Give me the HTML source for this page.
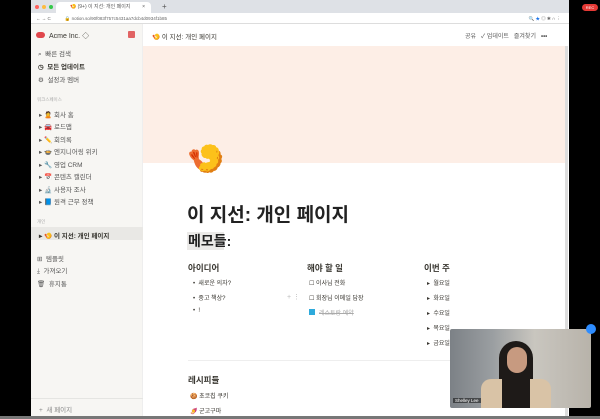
<!DOCTYPE html>
<html><head><meta charset="utf-8"><style>
*{margin:0;padding:0;box-sizing:border-box}
body{width:600px;height:419px;background:#000;position:relative;overflow:hidden;font-family:"Liberation Sans","Noto Sans CJK KR",sans-serif;color:#37352f}
.abs{position:absolute}
.win{left:31px;top:0;width:538px;height:416px;background:#fff;overflow:hidden}
.tabs{left:0;top:0;width:538px;height:13px;background:#dee1e6}
.tab{left:45px;top:2px;width:95px;height:11px;background:#fff;border-radius:4px 4px 0 0;font-size:5px;line-height:11px;padding-left:14px;color:#555}
.addr{left:0;top:13px;width:538px;height:11px;background:#fff;border-bottom:1px solid #ddd;font-size:4.5px;line-height:11px;color:#666}
.side{left:0;top:24px;width:112px;height:392px;background:#f7f6f3;border-right:1px solid #eee}
.si{position:absolute;left:0;font-size:6.5px;color:#555;white-space:nowrap}
.main{left:112px;top:24px;width:426px;height:392px}
.t{position:absolute;white-space:nowrap}
</style></head><body>
<div class="abs win">
 <div class="abs tabs">
  <div class="abs" style="left:4px;top:5px;width:4px;height:4px;border-radius:50%;background:#fc605c"></div>
  <div class="abs" style="left:11px;top:5px;width:4px;height:4px;border-radius:50%;background:#fdbc40"></div>
  <div class="abs" style="left:18px;top:5px;width:4px;height:4px;border-radius:50%;background:#34c84a"></div>
  <div class="abs tab" style="left:25px">🍤 (9+) 이 지선: 개인 페이지<span style="position:absolute;right:6px">×</span></div>
  <div class="abs" style="left:131px;top:2px;font-size:8px;color:#555">+</div>
 </div>
 <div class="abs addr"><span style="margin-left:5px">← → C</span><span style="margin-left:14px">🔒 notion.so/90f083f757c5431aa7dcb4d0934f1b85</span><span style="position:absolute;right:8px">🔍 <span style="color:#1a73e8">★</span> ◎ ✱ ∩ ⋮</span></div>
 <div class="abs side">
  <div class="si" style="left:5px;top:7px;font-size:7px;color:#37352f"><span style="display:inline-block;width:9px;height:6px;background:#e0474c;border-radius:3px;margin-right:4px"></span>Acme Inc. ◇</div>
  <div class="abs" style="left:97px;top:7px;width:7px;height:7px;background:#e16363;border-radius:1px"></div>
  <div class="si" style="left:7px;top:24px">⌕&nbsp; 빠른 검색</div>
  <div class="si" style="left:7px;top:37px;color:#37352f;font-weight:bold">◷&nbsp; 모든 업데이트</div>
  <div class="si" style="left:7px;top:50px">⚙&nbsp; 설정과 멤버</div>
  <div class="si" style="left:6px;top:73px;font-size:4.5px;color:#aaa">워크스페이스</div>
  <div class="si" style="left:8px;top:85px">▸ 🙎 회사 홈</div>
  <div class="si" style="left:8px;top:97px">▸ 🚘 로드맵</div>
  <div class="si" style="left:8px;top:110px">▸ ✏️ 회의록</div>
  <div class="si" style="left:8px;top:122px">▸ 🍲 엔지니어링 위키</div>
  <div class="si" style="left:8px;top:135px">▸ 🔧 영업 CRM</div>
  <div class="si" style="left:8px;top:147px">▸ 📅 콘텐츠 캘린더</div>
  <div class="si" style="left:8px;top:160px">▸ 🔬 사용자 조사</div>
  <div class="si" style="left:8px;top:172px">▸ 📘 원격 근무 정책</div>
  <div class="si" style="left:6px;top:195px;font-size:4.5px;color:#aaa">개인</div>
  <div class="abs" style="left:0;top:203px;width:112px;height:13px;background:#e9e8e5"></div>
  <div class="si" style="left:8px;top:206px;color:#37352f;font-weight:bold">▸ 🍤 이 지선: 개인 페이지</div>
  <div class="si" style="left:6px;top:229px">⊞&nbsp; 템플릿</div>
  <div class="si" style="left:6px;top:241px">⤓&nbsp; 가져오기</div>
  <div class="si" style="left:6px;top:254px">🗑&nbsp; 휴지통</div>
  <div class="abs" style="left:0;top:374px;width:112px;border-top:1px solid #e5e5e2"></div>
  <div class="si" style="left:8px;top:380px;color:#888">+&nbsp; 새 페이지</div>
 </div>
 <div class="abs main">
  <div class="t" style="left:9px;top:7px;font-size:6.5px">🍤 이 지선: 개인 페이지</div>
  <div class="t" style="left:322px;top:7px;font-size:6px;color:#555">공유&nbsp;&nbsp; ✓ 업데이트&nbsp;&nbsp; 즐겨찾기&nbsp;&nbsp; <b>•••</b></div>
  <div class="abs" style="left:0;top:22px;width:422px;height:117px;background:#fdeee6"></div>
  <div class="abs" style="left:422px;top:22px;width:3px;height:370px;background:#ddd"></div>
  <div class="t" style="left:44px;top:118px;font-size:30px">🍤</div>
  <div class="t" style="left:44px;top:176px;font-size:19px;font-weight:bold;color:#222">이 지선: 개인 페이지</div>
  <div class="abs" style="left:44px;top:208px;width:37px;height:18px;background:#ebeae8"></div>
  <div class="t" style="left:45px;top:207px;font-size:14px;font-weight:bold;color:#222">메모들:</div>
  <div class="t" style="left:45px;top:238px;font-size:8.5px;font-weight:bold">아이디어</div>
  <div class="t" style="left:50px;top:254px;font-size:6px">•&nbsp; 새로운 의자?</div>
  <div class="t" style="left:50px;top:269px;font-size:6px">•&nbsp; 중고 책상?</div>
  <div class="t" style="left:50px;top:284px;font-size:6px">•&nbsp; !</div>
  <div class="t" style="left:144px;top:269px;font-size:7px;color:#bbb">+ ⋮</div>
  <div class="t" style="left:164px;top:238px;font-size:8.5px;font-weight:bold">해야 할 일</div>
  <div class="t" style="left:166px;top:254px;font-size:6px">☐ 이사님 전화</div>
  <div class="t" style="left:166px;top:269px;font-size:6px">☐ 회장님 이메일 답장</div>
  <div class="abs" style="left:166px;top:285px;width:6px;height:6px;background:#2eaadc"></div>
  <div class="t" style="left:176px;top:284px;font-size:6px;color:#aaa;text-decoration:line-through">레스토랑 예약</div>
  <div class="t" style="left:281px;top:238px;font-size:8.5px;font-weight:bold">이번 주</div>
  <div class="t" style="left:284px;top:254px;font-size:6px">▸&nbsp; 월요일</div>
  <div class="t" style="left:284px;top:269px;font-size:6px">▸&nbsp; 화요일</div>
  <div class="t" style="left:284px;top:284px;font-size:6px">▸&nbsp; 수요일</div>
  <div class="t" style="left:284px;top:299px;font-size:6px">▸&nbsp; 목요일</div>
  <div class="t" style="left:284px;top:314px;font-size:6px">▸&nbsp; 금요일</div>
  <div class="abs" style="left:45px;top:336px;width:330px;border-top:1px solid #eee"></div>
  <div class="t" style="left:45px;top:350px;font-size:8.5px;font-weight:bold">레시피들</div>
  <div class="t" style="left:47px;top:367px;font-size:6px">🍪 초코칩 쿠키</div>
  <div class="t" style="left:47px;top:382px;font-size:6px">🍠 군고구마</div>
 </div>
</div>
<div class="abs" style="left:0;top:416px;width:600px;height:3px;background:#777"></div>
<div class="abs" style="left:582px;top:4px;width:16px;height:7px;background:#e53935;border-radius:4px;font-size:4px;color:#fff;text-align:center;line-height:7px">REC</div>
<div class="abs" style="left:450px;top:329px;width:141px;height:79px;background:linear-gradient(90deg,#7c8186 0,#9a9ea1 30%,#c9c6bf 60%,#b8b3aa 100%);border-radius:2px;overflow:hidden">
 <div class="abs" style="left:49px;top:12px;width:34px;height:70px;background:#1e1a18;border-radius:17px 17px 0 0"></div>
 <div class="abs" style="left:57px;top:18px;width:20px;height:26px;background:#c79a80;border-radius:10px"></div>
 <div class="abs" style="left:31px;top:50px;width:70px;height:30px;background:#d9c3a6;border-radius:10px 10px 0 0"></div>
 <div class="abs" style="left:52px;top:48px;width:28px;height:31px;background:#1e1a18"></div>
 <div class="abs" style="left:3px;top:69px;font-size:4.5px;color:#fff;background:rgba(0,0,0,.5);padding:0 2px">Shelley Lee</div>
</div>
<div class="abs" style="left:586px;top:324px;width:10px;height:10px;border-radius:50%;background:#2d8cff"></div>
</body></html>
